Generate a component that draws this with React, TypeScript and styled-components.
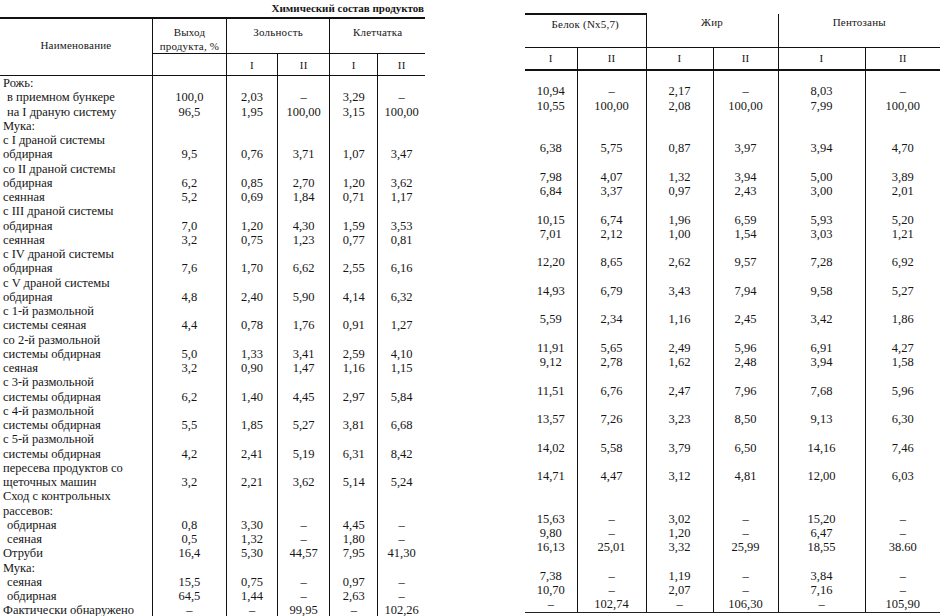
import React from "react";
import styled, { createGlobalStyle } from "styled-components";

const Global = createGlobalStyle`
  html, body {
    margin: 0;
    padding: 0;
    background: #fff;
  }
  body {
    font-family: "Liberation Serif", "Times New Roman", serif;
    color: #161616;
  }
`;

const Spread = styled.div`
  display: flex;
  align-items: flex-start;
  width: 949px;
  height: 616px;
  overflow: hidden;
  background: #fff;
`;

const LeftPage = styled.div`
  width: 425px;
  display: flex;
  flex-direction: column;
`;

const RightPage = styled.div`
  width: 415px;
  margin-left: 100px;
  padding-top: 13px;
`;

const Title = styled.div`
  height: 17px;
  line-height: 17px;
  text-align: right;
  font-size: 11px;
  font-weight: bold;
  padding-right: 1px;
`;

const Table = styled.table`
  border-collapse: collapse;
  table-layout: fixed;
  width: 100%;
`;

const HeadRow = styled.tr<{ $h: number }>`
  height: ${(p) => p.$h}px;
`;

const Head = styled.th<{ $line?: boolean; $top?: boolean; $under?: number; $valign?: string; $pt?: number; $pb?: number }>`
  padding: ${(p) => p.$pt ?? 0}px 0 ${(p) => p.$pb ?? 0}px;
  font-weight: normal;
  font-size: 11px;
  line-height: 14px;
  letter-spacing: 0.2px;
  text-align: center;
  vertical-align: ${(p) => p.$valign || "top"};
  border-left: ${(p) => (p.$line ? "1.5px solid #111" : "none")};
  border-top: ${(p) => (p.$top ? "2px solid #111" : "none")};
  border-bottom: ${(p) => (p.$under ? `${p.$under}px solid #111` : "none")};
`;

const Row = styled.tr`
  height: 14.25px;
`;

const Name = styled.td<{ $sub?: boolean; $last?: boolean }>`
  padding: 0 0 0 ${(p) => (p.$sub ? 7 : 3)}px;
  font-size: 12.5px;
  line-height: 14.25px;
  white-space: nowrap;
  overflow: hidden;
  border-bottom: ${(p) => (p.$last ? "1.5px solid #222" : "none")};
`;

const Cell = styled.td<{ $line?: boolean; $last?: boolean }>`
  padding: 0;
  font-size: 12.5px;
  line-height: 14.25px;
  text-align: center;
  white-space: nowrap;
  border-left: ${(p) => (p.$line ? "1.5px solid #111" : "none")};
  border-bottom: ${(p) => (p.$last ? "1.5px solid #222" : "none")};
`;

type Line = { name: string; sub?: boolean; left?: string[]; right?: string[] };

const d = "–";

const lines: Line[] = [
  { name: "Рожь:" },
  { name: "в приемном бункере", sub: true, left: ["100,0", "2,03", d, "3,29", d], right: ["10,94", d, "2,17", d, "8,03", d] },
  { name: "на I драную систему", sub: true, left: ["96,5", "1,95", "100,00", "3,15", "100,00"], right: ["10,55", "100,00", "2,08", "100,00", "7,99", "100,00"] },
  { name: "Мука:" },
  { name: "с I драной системы" },
  { name: "обдирная", left: ["9,5", "0,76", "3,71", "1,07", "3,47"], right: ["6,38", "5,75", "0,87", "3,97", "3,94", "4,70"] },
  { name: "со II драной системы" },
  { name: "обдирная", left: ["6,2", "0,85", "2,70", "1,20", "3,62"], right: ["7,98", "4,07", "1,32", "3,94", "5,00", "3,89"] },
  { name: "сеянная", left: ["5,2", "0,69", "1,84", "0,71", "1,17"], right: ["6,84", "3,37", "0,97", "2,43", "3,00", "2,01"] },
  { name: "с III драной системы" },
  { name: "обдирная", left: ["7,0", "1,20", "4,30", "1,59", "3,53"], right: ["10,15", "6,74", "1,96", "6,59", "5,93", "5,20"] },
  { name: "сеянная", left: ["3,2", "0,75", "1,23", "0,77", "0,81"], right: ["7,01", "2,12", "1,00", "1,54", "3,03", "1,21"] },
  { name: "с IV драной системы" },
  { name: "обдирная", left: ["7,6", "1,70", "6,62", "2,55", "6,16"], right: ["12,20", "8,65", "2,62", "9,57", "7,28", "6,92"] },
  { name: "с V драной системы" },
  { name: "обдирная", left: ["4,8", "2,40", "5,90", "4,14", "6,32"], right: ["14,93", "6,79", "3,43", "7,94", "9,58", "5,27"] },
  { name: "с 1-й размольной" },
  { name: "системы сеяная", left: ["4,4", "0,78", "1,76", "0,91", "1,27"], right: ["5,59", "2,34", "1,16", "2,45", "3,42", "1,86"] },
  { name: "со 2-й размольной" },
  { name: "системы обдирная", left: ["5,0", "1,33", "3,41", "2,59", "4,10"], right: ["11,91", "5,65", "2,49", "5,96", "6,91", "4,27"] },
  { name: "сеяная", left: ["3,2", "0,90", "1,47", "1,16", "1,15"], right: ["9,12", "2,78", "1,62", "2,48", "3,94", "1,58"] },
  { name: "с 3-й размольной" },
  { name: "системы обдирная", left: ["6,2", "1,40", "4,45", "2,97", "5,84"], right: ["11,51", "6,76", "2,47", "7,96", "7,68", "5,96"] },
  { name: "с 4-й размольной" },
  { name: "системы обдирная", left: ["5,5", "1,85", "5,27", "3,81", "6,68"], right: ["13,57", "7,26", "3,23", "8,50", "9,13", "6,30"] },
  { name: "с 5-й размольной" },
  { name: "системы обдирная", left: ["4,2", "2,41", "5,19", "6,31", "8,42"], right: ["14,02", "5,58", "3,79", "6,50", "14,16", "7,46"] },
  { name: "пересева продуктов со" },
  { name: "щеточных машин", left: ["3,2", "2,21", "3,62", "5,14", "5,24"], right: ["14,71", "4,47", "3,12", "4,81", "12,00", "6,03"] },
  { name: "Сход с контрольных" },
  { name: "рассевов:" },
  { name: "обдирная", sub: true, left: ["0,8", "3,30", d, "4,45", d], right: ["15,63", d, "3,02", d, "15,20", d] },
  { name: "сеяная", sub: true, left: ["0,5", "1,32", d, "1,80", d], right: ["9,80", d, "1,20", d, "6,47", d] },
  { name: "Отруби", left: ["16,4", "5,30", "44,57", "7,95", "41,30"], right: ["16,13", "25,01", "3,32", "25,99", "18,55", "38.60"] },
  { name: "Мука:" },
  { name: "сеяная", sub: true, left: ["15,5", "0,75", d, "0,97", d], right: ["7,38", d, "1,19", d, "3,84", d] },
  { name: "обдирная", sub: true, left: ["64,5", "1,44", d, "2,63", d], right: ["10,70", d, "2,07", d, "7,16", d] },
  { name: "Фактически обнаружено", left: [d, d, "99,95", d, "102,26"], right: [d, "102,74", d, "106,30", d, "105,90"] },
];

const leftCols = [152, 74, 51, 52, 48, 47];
const rightCols = [52, 69, 67, 65, 87, 75];

const ProductsTable = () => (
  <LeftPage>
    <Title>Химический состав продуктов</Title>
    <Table>
      <colgroup>
        {leftCols.map((w, i) => (
          <col key={i} style={{ width: w }} />
        ))}
      </colgroup>
      <thead>
        <HeadRow $h={35}>
          <Head rowSpan={2} $top $under={1.5} $valign="middle" $pb={4}>
            Наименование
          </Head>
          <Head $line $top $under={1} $pt={6}>
            Выход
            <br />
            продукта, %
          </Head>
          <Head colSpan={2} $line $top $under={1} $pt={6}>
            Зольность
          </Head>
          <Head colSpan={2} $line $top $under={1} $pt={6}>
            Клетчатка
          </Head>
        </HeadRow>
        <HeadRow $h={22}>
          <Head $line $under={1.5} $valign="middle" />
          <Head $line $under={1.5} $valign="middle">I</Head>
          <Head $line $under={1.5} $valign="middle">II</Head>
          <Head $line $under={1.5} $valign="middle">I</Head>
          <Head $line $under={1.5} $valign="middle">II</Head>
        </HeadRow>
      </thead>
      <tbody>
        {lines.map((l, i) => {
          const last = i === lines.length - 1;
          return (
            <Row key={i}>
              <Name $sub={l.sub} $last={last}>{l.name}</Name>
              {[0, 1, 2, 3, 4].map((c) => (
                <Cell key={c} $line $last={last}>
                  {l.left ? l.left[c] : ""}
                </Cell>
              ))}
            </Row>
          );
        })}
      </tbody>
    </Table>
  </LeftPage>
);

const groups = ["Белок (Nx5,7)", "Жир", "Пентозаны"];

const CompositionTable = () => (
  <RightPage>
    <Table>
      <colgroup>
        {rightCols.map((w, i) => (
          <col key={i} style={{ width: w }} />
        ))}
      </colgroup>
      <thead>
        <HeadRow $h={33}>
          {groups.map((g, i) => (
            <Head key={g} colSpan={2} $line={i > 0} $top={i === 0} $under={1.5} $pt={i === 0 ? 2 : 1}>
              {g}
            </Head>
          ))}
        </HeadRow>
        <HeadRow $h={23}>
          {[0, 1, 2, 3, 4, 5].map((c) => (
            <Head key={c} $line={c > 0} $under={2} $valign="middle">
              {c % 2 === 0 ? "I" : "II"}
            </Head>
          ))}
        </HeadRow>
      </thead>
      <tbody>
        {lines.map((l, i) => {
          const last = i === lines.length - 1;
          return (
            <Row key={i}>
              {[0, 1, 2, 3, 4, 5].map((c) => (
                <Cell key={c} $line={c > 0} $last={last}>
                  {l.right ? l.right[c] : ""}
                </Cell>
              ))}
            </Row>
          );
        })}
      </tbody>
    </Table>
  </RightPage>
);

export default function App() {
  return (
    <>
      <Global />
      <Spread>
        <ProductsTable />
        <CompositionTable />
      </Spread>
    </>
  );
}
